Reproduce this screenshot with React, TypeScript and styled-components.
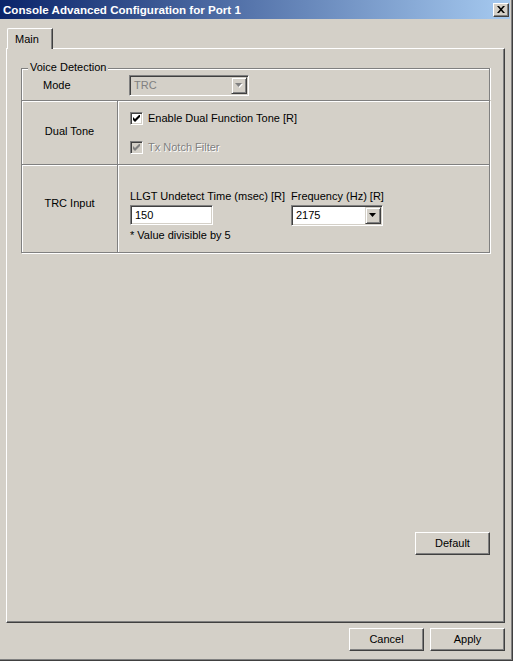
import React from "react";
import styled, { createGlobalStyle } from "styled-components";

const GlobalStyle = createGlobalStyle`
  html, body {
    margin: 0;
    padding: 0;
    background: #d4d0c8;
  }
  body {
    font-family: "Liberation Sans", Arial, sans-serif;
    font-size: 11px;
    color: #000;
  }
  * {
    box-sizing: border-box;
  }
`;

const Window = styled.div`
  width: 513px;
  height: 661px;
  background: #d4d0c8;
  border-right: 1px solid #404040;
  border-bottom: 1px solid #404040;
  box-shadow: inset -1px -1px 0 #808080;
  padding: 0 2px 0 0;
  display: flex;
  flex-direction: column;
`;

const TitleBar = styled.div`
  height: 19px;
  display: flex;
  align-items: center;
  justify-content: space-between;
  padding: 0 1px 0 3px;
  background: linear-gradient(to right, #0a246a, #a6caf0);
`;

const Title = styled.span`
  color: #fff;
  font-weight: bold;
  font-size: 11.6px;
  line-height: 19px;
`;

const CloseButton = styled.div`
  width: 16px;
  height: 14px;
  display: flex;
  align-items: center;
  justify-content: center;
  background: #d4d0c8;
  border: 1px solid;
  border-color: #fff #404040 #404040 #fff;
  box-shadow: inset -1px -1px 0 #808080;
`;

const Body = styled.div`
  flex: 1;
  display: flex;
  flex-direction: column;
  padding: 9px 0 0 6px;
  width: 505px;
`;

const TabStrip = styled.div`
  height: 20px;
  display: flex;
  padding-left: 1px;
  position: relative;
  z-index: 1;
`;

const Tab = styled.div`
  width: 46px;
  height: 21px;
  background: #d4d0c8;
  border-left: 1px solid #fff;
  border-top: 1px solid #fff;
  border-right: 1px solid #404040;
  border-top-left-radius: 2px;
  box-shadow: inset -1px 0 0 #808080;
  padding: 4px 0 0 7px;
  line-height: 13px;
`;

const Panel = styled.div`
  height: 575px;
  display: flex;
  flex-direction: column;
  border-top: 1px solid #fff;
  border-left: 1px solid #fff;
  border-right: 1px solid #404040;
  border-bottom: 1px solid #404040;
  box-shadow: inset -1px -1px 0 #808080;
  padding: 19px 14px 0 14px;
`;

const Group = styled.div`
  position: relative;
  height: 32px;
  border-top: 1px solid #808080;
  border-left: 1px solid #808080;
  border-right: 1px solid #808080;
  box-shadow: inset 1px 1px 0 #fff, 1px 0 0 #fff;
  padding: 6px 0 0 21px;
  display: flex;
  align-items: flex-start;
`;

const Legend = styled.span`
  position: absolute;
  top: -8px;
  left: 6px;
  padding: 0 2px;
  background: #d4d0c8;
  line-height: 13px;
`;

const ModeLabel = styled.span`
  width: 86px;
  line-height: 20px;
`;

const Table = styled.div`
  display: grid;
  grid-template-columns: 96px 1fr;
  grid-template-rows: 64px 88px;
  border-right: 1px solid #808080;
  border-bottom: 1px solid #808080;
  box-shadow: 1px 1px 0 #fff;
`;

const Cell = styled.div`
  border-top: 1px solid #808080;
  border-left: 1px solid #808080;
  box-shadow: inset 1px 1px 0 #fff;
`;

const LabelCell = styled(Cell)<{ $lift: number }>`
  display: flex;
  align-items: center;
  justify-content: center;
  padding-bottom: ${(p) => p.$lift}px;
`;

const ChecksCell = styled(Cell)`
  display: flex;
  flex-direction: column;
  gap: 16px;
  padding: 11px 0 0 12px;
`;

const FieldsCell = styled(Cell)`
  display: flex;
  padding: 25px 0 0 12px;
`;

const FieldCol = styled.div<{ $w?: number }>`
  width: ${(p) => (p.$w ? `${p.$w}px` : "auto")};
  display: flex;
  flex-direction: column;
  align-items: flex-start;
`;

const FieldLabel = styled.span`
  line-height: 13px;
  margin-bottom: 2px;
  white-space: nowrap;
`;

const Note = styled.span`
  line-height: 13px;
  margin-top: 4px;
`;

const CheckRow = styled.div<{ $disabled?: boolean }>`
  height: 13px;
  display: flex;
  align-items: center;
  line-height: 13px;
  color: ${(p) => (p.$disabled ? "#808080" : "#000")};
  text-shadow: ${(p) => (p.$disabled ? "1px 1px 0 #fff" : "none")};
`;

const Box = styled.div<{ $disabled?: boolean }>`
  width: 13px;
  height: 13px;
  margin-right: 5px;
  border: 1px solid;
  border-color: #808080 #fff #fff #808080;
  box-shadow: inset 1px 1px 0 #404040, inset -1px -1px 0 #d4d0c8;
  background: ${(p) => (p.$disabled ? "#d4d0c8" : "#fff")};
  display: flex;
  align-items: center;
  justify-content: center;
`;

const Field = styled.div<{ $w: number; $h: number; $disabled?: boolean }>`
  width: ${(p) => p.$w}px;
  height: ${(p) => p.$h}px;
  border: 1px solid;
  border-color: #808080 #fff #fff #808080;
  box-shadow: inset 1px 1px 0 #404040, inset -1px -1px 0 #d4d0c8;
  background: ${(p) => (p.$disabled ? "#d4d0c8" : "#fff")};
  color: ${(p) => (p.$disabled ? "#808080" : "#000")};
  padding: 1px;
  display: flex;
  align-items: stretch;
`;

const FieldValue = styled.span`
  flex: 1;
  padding-left: 3px;
  display: flex;
  align-items: center;
  line-height: 13px;
`;

const ArrowButton = styled.div`
  width: 16px;
  display: flex;
  align-items: center;
  justify-content: center;
  background: #d4d0c8;
  border: 1px solid;
  border-color: #d4d0c8 #404040 #404040 #d4d0c8;
  box-shadow: inset 1px 1px 0 #fff, inset -1px -1px 0 #808080;
`;

const BottomRow = styled.div`
  margin-top: auto;
  padding-bottom: 67px;
  display: flex;
  justify-content: flex-end;
`;

const Footer = styled.div`
  margin-top: 5px;
  display: flex;
  justify-content: flex-end;
  gap: 6px;
`;

const Button = styled.div`
  width: 75px;
  height: 23px;
  display: flex;
  align-items: center;
  justify-content: center;
  background: #d4d0c8;
  border: 1px solid;
  border-color: #fff #404040 #404040 #fff;
  box-shadow: inset -1px -1px 0 #808080;
  line-height: 13px;
`;

const CheckMark = ({ color }: { color: string }) => (
  <svg width="7" height="7" viewBox="0 0 7 7">
    <path d="M0 2v3l2 2 5-5V-1L2 4z" fill={color} />
  </svg>
);

const Arrow = ({ disabled }: { disabled?: boolean }) => (
  <svg width="8" height="5" viewBox="0 0 8 5">
    {disabled && <path d="M1 1h7L4.5 5z" fill="#fff" />}
    <path d="M0 0h7L3.5 4z" fill={disabled ? "#808080" : "#000"} />
  </svg>
);

const Combo = ({
  value,
  w,
  h,
  disabled,
}: {
  value: string;
  w: number;
  h: number;
  disabled?: boolean;
}) => (
  <Field $w={w} $h={h} $disabled={disabled}>
    <FieldValue>{value}</FieldValue>
    <ArrowButton>
      <Arrow disabled={disabled} />
    </ArrowButton>
  </Field>
);

export default function App() {
  return (
    <>
      <GlobalStyle />
      <Window>
        <TitleBar>
          <Title>Console Advanced Configuration for Port 1</Title>
          <CloseButton>
            <svg width="8" height="7" viewBox="0 0 8 7">
              <path d="M0 0h2l2 2.3L6 0h2L5 3.5 8 7H6L4 4.7 2 7H0l3-3.5z" fill="#000" />
            </svg>
          </CloseButton>
        </TitleBar>
        <Body>
          <TabStrip>
            <Tab>Main</Tab>
          </TabStrip>
          <Panel>
            <Group>
              <Legend>Voice Detection</Legend>
              <ModeLabel>Mode</ModeLabel>
              <Combo value="TRC" w={120} h={21} disabled />
            </Group>
            <Table>
              <LabelCell $lift={3}>Dual Tone</LabelCell>
              <ChecksCell>
                <CheckRow>
                  <Box>
                    <CheckMark color="#000" />
                  </Box>
                  Enable Dual Function Tone [R]
                </CheckRow>
                <CheckRow $disabled>
                  <Box $disabled>
                    <CheckMark color="#808080" />
                  </Box>
                  Tx Notch Filter
                </CheckRow>
              </ChecksCell>
              <LabelCell $lift={11}>TRC Input</LabelCell>
              <FieldsCell>
                <FieldCol $w={161}>
                  <FieldLabel>LLGT Undetect Time (msec) [R]</FieldLabel>
                  <Field $w={83} $h={20}>
                    <FieldValue>150</FieldValue>
                  </Field>
                  <Note>* Value divisible by 5</Note>
                </FieldCol>
                <FieldCol>
                  <FieldLabel>Frequency (Hz) [R]</FieldLabel>
                  <Combo value="2175" w={92} h={21} />
                </FieldCol>
              </FieldsCell>
            </Table>
            <BottomRow>
              <Button>Default</Button>
            </BottomRow>
          </Panel>
          <Footer>
            <Button>Cancel</Button>
            <Button>Apply</Button>
          </Footer>
        </Body>
      </Window>
    </>
  );
}
